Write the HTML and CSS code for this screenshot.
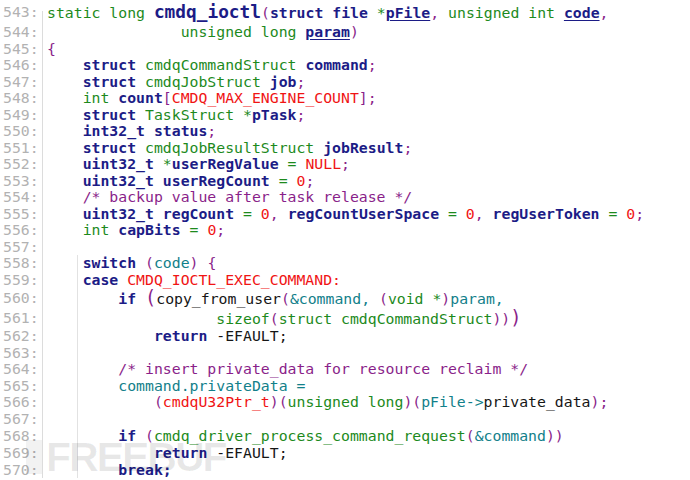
FILE: index.html
```html
<!DOCTYPE html>
<html lang="en">
<head>
    <meta charset="UTF-8">
    <title>cmdq_ioctl</title>
    <link rel="stylesheet" href="styles.css">
</head>
<body>
<div class="listing">
    <div class="row first"><span class="num">543:</span><code class="src"><span class="t">static long </span><span class="fn">cmdq_ioctl</span><span class="p">(</span><span class="k">struct file </span><span class="t">*</span><span class="k u">pFile</span><span class="p">,</span><span class="t"> unsigned int </span><span class="k u">code</span><span class="p">,</span></code></div>
    <div class="row"><span class="num">544:</span><code class="src">               <span class="t">unsigned long </span><span class="k u">param</span><span class="p">)</span></code></div>
    <div class="row"><span class="num">545:</span><code class="src"><span class="p">{</span></code></div>
    <div class="row"><span class="num">546:</span><code class="src">    <span class="k">struct</span> <span class="t">cmdqCommandStruct</span> <span class="k">command</span><span class="p">;</span></code></div>
    <div class="row"><span class="num">547:</span><code class="src">    <span class="k">struct</span> <span class="t">cmdqJobStruct</span> <span class="k">job</span><span class="p">;</span></code></div>
    <div class="row"><span class="num">548:</span><code class="src">    <span class="t">int</span> <span class="k">count</span><span class="p">[</span><span class="n">CMDQ_MAX_ENGINE_COUNT</span><span class="p">];</span></code></div>
    <div class="row"><span class="num">549:</span><code class="src">    <span class="k">struct</span> <span class="t">TaskStruct *</span><span class="k">pTask</span><span class="p">;</span></code></div>
    <div class="row"><span class="num">550:</span><code class="src">    <span class="k">int32_t status</span><span class="p">;</span></code></div>
    <div class="row"><span class="num">551:</span><code class="src">    <span class="k">struct</span> <span class="t">cmdqJobResultStruct</span> <span class="k">jobResult</span><span class="p">;</span></code></div>
    <div class="row"><span class="num">552:</span><code class="src">    <span class="k">uint32_t</span> <span class="t">*</span><span class="k">userRegValue</span> <span class="t">=</span> <span class="n">NULL</span><span class="p">;</span></code></div>
    <div class="row"><span class="num">553:</span><code class="src">    <span class="k">uint32_t userRegCount</span> <span class="t">=</span> <span class="n">0</span><span class="p">;</span></code></div>
    <div class="row"><span class="num">554:</span><code class="src">    <span class="c">/* backup value after task release */</span></code></div>
    <div class="row"><span class="num">555:</span><code class="src">    <span class="k">uint32_t regCount</span> <span class="t">=</span> <span class="n">0</span><span class="p">,</span> <span class="k">regCountUserSpace</span> <span class="t">=</span> <span class="n">0</span><span class="p">,</span> <span class="k">regUserToken</span> <span class="t">=</span> <span class="n">0</span><span class="p">;</span></code></div>
    <div class="row"><span class="num">556:</span><code class="src">    <span class="t">int</span> <span class="k">capBits</span> <span class="t">=</span> <span class="n">0</span><span class="p">;</span></code></div>
    <div class="row"><span class="num">557:</span><code class="src"> </code></div>
    <div class="row"><span class="num">558:</span><code class="src guide">    <span class="k">switch</span> <span class="p">(</span><span class="v">code</span><span class="p">)</span> <span class="p">{</span></code></div>
    <div class="row"><span class="num">559:</span><code class="src guide">    <span class="k">case</span><span class="n"> CMDQ_IOCTL_EXEC_COMMAND:</span></code></div>
    <div class="row tall"><span class="num">560:</span><code class="src guide">        <span class="k">if</span> <span class="p big">(</span><span class="f">copy_from_user</span><span class="p">(</span><span class="v">&amp;command, </span><span class="p">(</span><span class="t">void *</span><span class="p">)</span><span class="v">param,</span></code></div>
    <div class="row tall"><span class="num">561:</span><code class="src guide">                   <span class="t">sizeof</span><span class="p">(</span><span class="t">struct cmdqCommandStruct</span><span class="p">))</span><span class="p big">)</span></code></div>
    <div class="row"><span class="num">562:</span><code class="src guide">            <span class="k">return</span><span class="f"> -EFAULT;</span></code></div>
    <div class="row"><span class="num">563:</span><code class="src guide"> </code></div>
    <div class="row"><span class="num">564:</span><code class="src guide">        <span class="c">/* insert private_data for resource reclaim */</span></code></div>
    <div class="row"><span class="num">565:</span><code class="src guide">        <span class="v">command.privateData =</span></code></div>
    <div class="row"><span class="num">566:</span><code class="src guide">            <span class="p">(</span><span class="n">cmdqU32Ptr_t</span><span class="p">)(</span><span class="t">unsigned long</span><span class="p">)(</span><span class="v">pFile-&gt;</span><span class="f">private_data</span><span class="p">);</span></code></div>
    <div class="row"><span class="num">567:</span><code class="src guide"> </code></div>
    <div class="row mid"><span class="num">568:</span><code class="src guide">        <span class="k">if</span> <span class="p">(</span><span class="t">cmdq_driver_process_command_request</span><span class="p">(</span><span class="v">&amp;command</span><span class="p">))</span></code></div>
    <div class="row"><span class="num">569:</span><code class="src guide">            <span class="k">return</span><span class="f"> -EFAULT;</span></code></div>
    <div class="row"><span class="num">570:</span><code class="src guide">        <span class="k">break;</span></code></div>

    <div class="watermark" aria-hidden="true"><span class="wm-mark"></span>FREEBUF</div>
</div>
</body>
</html>
```

FILE: styles.css
```css
:root {
    --navy: #1c1c86;
    --green: #1d8a1d;
    --purple: #8a1f8a;
    --red: #f01414;
    --teal: #12808a;
    --ink: #161616;
    --gutter: #b2b2b2;
}

* {
    margin: 0;
    padding: 0;
    box-sizing: border-box;
}

body {
    background: #fff;
    width: 690px;
    height: 480px;
    overflow: hidden;
}

.listing {
    position: relative;
    font-family: "DejaVu Sans Mono", "Liberation Mono", monospace;
    font-size: 14.8px;
}

.row {
    display: flex;
    height: 16.5px;
    line-height: 16.5px;
}

.row.first {
    height: 24px;
    line-height: 24px;
}

.row.tall {
    height: 20px;
    line-height: 20px;
}

.row.mid {
    height: 18px;
    line-height: 18px;
}

.num {
    width: 42px;
    padding-left: 3px;
    color: var(--gutter);
    flex-shrink: 0;
}

.src {
    flex: 1;
    font: inherit;
    white-space: pre;
    padding-left: 4px;
    border-left: 1px solid #dcdcdc;
    color: var(--ink);
}

.row.first .src {
    border-image: linear-gradient(to bottom, transparent 11px, #dcdcdc 11px) 1;
}

/* fold guide under the switch block */
.src.guide {
    background: linear-gradient(#e2e2e2, #e2e2e2) no-repeat 34px 0 / 1px 100%;
}

.t { color: var(--green); }
.p { color: var(--purple); }
.n { color: var(--red); }
.v { color: var(--teal); }
.f { color: var(--ink); }
.c { color: var(--purple); }

.k {
    color: var(--navy);
    font-weight: bold;
}

.u {
    text-decoration: underline;
    text-underline-offset: 2px;
}

.fn {
    color: var(--navy);
    font-weight: bold;
    font-size: 17.8px;
}

.big {
    font-size: 18.6px;
}

.watermark {
    position: absolute;
    left: 26px;
    top: 437px;
    display: flex;
    align-items: center;
    gap: 4px;
    font-family: "Liberation Sans", Arial, sans-serif;
    font-weight: bold;
    font-size: 41px;
    line-height: 40px;
    letter-spacing: -2px;
    color: rgba(0, 0, 0, 0.09);
    pointer-events: none;
}

.wm-mark {
    width: 16px;
    height: 34px;
    background: rgba(0, 0, 0, 0.05);
}
```
